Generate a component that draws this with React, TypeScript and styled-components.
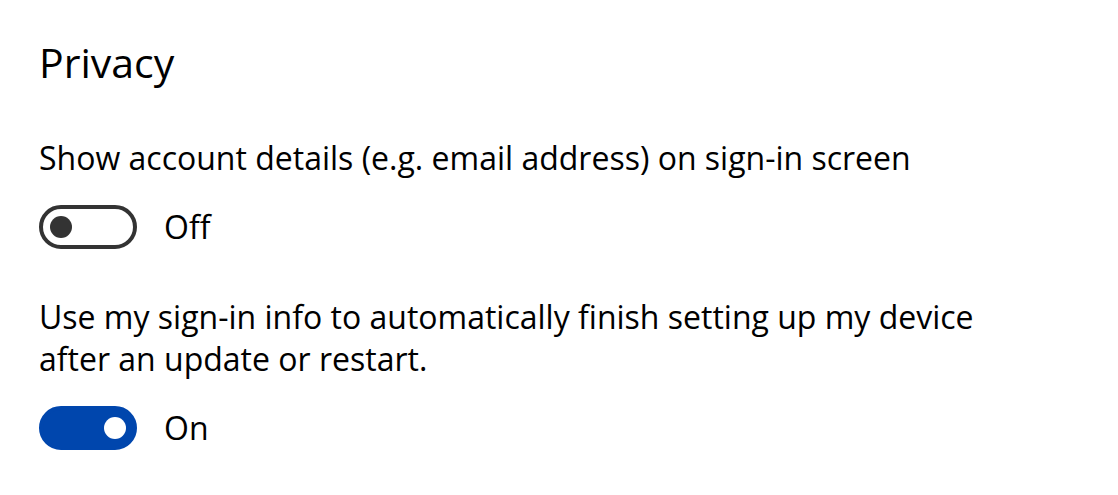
import React, { useState } from "react";
import styled, { createGlobalStyle } from "styled-components";

const GlobalStyle = createGlobalStyle`
  html, body {
    margin: 0;
    padding: 0;
    background: #ffffff;
  }
  body {
    font-family: "Open Sans", "Noto Sans", "Liberation Sans", sans-serif;
    color: #000000;
  }
`;

const Page = styled.main`
  padding: 29px 0 0 39px;
  display: flex;
  flex-direction: column;
`;

const Title = styled.h2`
  margin: 0 0 42px;
  font-size: 41px;
  font-weight: 400;
  line-height: 66px;
`;

const Setting = styled.section`
  display: flex;
  flex-direction: column;
  margin-bottom: 45px;
`;

const Label = styled.p`
  margin: 0 0 24px;
  font-size: 32px;
  line-height: 42px;
  max-width: 960px;
`;

const ToggleRow = styled.label`
  display: flex;
  align-items: center;
  gap: 27px;
  height: 48px;
  cursor: pointer;
`;

const Track = styled.span<{ $on: boolean }>`
  box-sizing: border-box;
  width: 98px;
  height: 44px;
  border-radius: 22px;
  border: 4.5px solid ${(p) => (p.$on ? "#0046ad" : "#333333")};
  background: ${(p) => (p.$on ? "#0046ad" : "#ffffff")};
  display: flex;
  align-items: center;
  justify-content: ${(p) => (p.$on ? "flex-end" : "flex-start")};
  padding: 0 7px;
`;

const Knob = styled.span<{ $on: boolean }>`
  width: 22px;
  height: 22px;
  border-radius: 50%;
  background: ${(p) => (p.$on ? "#ffffff" : "#333333")};
`;

const State = styled.span`
  font-size: 32px;
  line-height: 44px;
`;

function Toggle({ label, initial }: { label: string; initial: boolean }) {
  const [on, setOn] = useState(initial);
  return (
    <Setting>
      <Label>{label}</Label>
      <ToggleRow onClick={() => setOn(!on)}>
        <Track $on={on}>
          <Knob $on={on} />
        </Track>
        <State>{on ? "On" : "Off"}</State>
      </ToggleRow>
    </Setting>
  );
}

export default function App() {
  return (
    <>
      <GlobalStyle />
      <Page>
        <Title>Privacy</Title>
        <Toggle
          label="Show account details (e.g. email address) on sign-in screen"
          initial={false}
        />
        <Toggle
          label="Use my sign-in info to automatically finish setting up my device after an update or restart."
          initial={true}
        />
      </Page>
    </>
  );
}
